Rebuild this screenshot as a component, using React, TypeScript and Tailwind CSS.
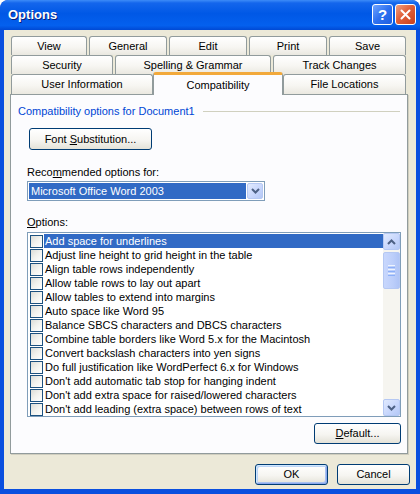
const font = "font-['Liberation_Sans',Arial,sans-serif]";

const rowOne = [
  { label: "View", w: "w-[76px]" },
  { label: "General", w: "w-[78px]" },
  { label: "Edit", w: "w-[78px]" },
  { label: "Print", w: "w-[78px]" },
  { label: "Save", w: "w-[77px]" },
];

const rowTwo = [
  { label: "Security", w: "w-[102px]" },
  { label: "Spelling & Grammar", w: "w-[156px]" },
  { label: "Track Changes", w: "w-[133px]" },
];

const options = [
  "Add space for underlines",
  "Adjust line height to grid height in the table",
  "Align table rows independently",
  "Allow table rows to lay out apart",
  "Allow tables to extend into margins",
  "Auto space like Word 95",
  "Balance SBCS characters and DBCS characters",
  "Combine table borders like Word 5.x for the Macintosh",
  "Convert backslash characters into yen signs",
  "Do full justification like WordPerfect 6.x for Windows",
  "Don't add automatic tab stop for hanging indent",
  "Don't add extra space for raised/lowered characters",
  "Don't add leading (extra space) between rows of text",
];

const tabBase =
  "flex items-center justify-center rounded-t-[3px] border border-b-0 border-[#919B9C] bg-[linear-gradient(180deg,#FFFFFF_0%,#F7F6F2_55%,#EAE8E0_100%)] text-[11px] text-black";

function Tab({ label, w }: { label: string; w: string }) {
  return <div className={`${tabBase} ${w} h-full`}>{label}</div>;
}

function XpButton({
  children,
  className,
  primary,
}: {
  children: React.ReactNode;
  className: string;
  primary?: boolean;
}) {
  return (
    <div
      className={`flex items-center justify-center rounded-[3px] border border-[#003C74] bg-[linear-gradient(180deg,#FFFFFF_0%,#F6F5F1_55%,#E4E2D8_100%)] text-[11px] text-black ${
        primary ? "shadow-[inset_1px_1px_0_#CEE7FF,inset_-1px_-1px_0_#8CA8EE,inset_2px_2px_0_#BCD4F6,inset_-2px_-2px_0_#A9C2F0]" : ""
      } ${className}`}
    >
      {children}
    </div>
  );
}

function Chevron({ up }: { up?: boolean }) {
  return (
    <svg width="9" height="6" viewBox="0 0 9 6">
      <polyline
        points={up ? "1,5 4.5,1.5 8,5" : "1,1 4.5,4.5 8,1"}
        fill="none"
        stroke="#4D6185"
        strokeWidth="2"
      />
    </svg>
  );
}

function ScrollButton({ up }: { up?: boolean }) {
  return (
    <div className="flex h-[17px] w-[17px] items-center justify-center rounded-[2px] border border-[#B5C8F3] bg-[linear-gradient(135deg,#E1EAFE_0%,#C6D5FC_60%,#B4C8F6_100%)]">
      <Chevron up={up} />
    </div>
  );
}

function Checkbox() {
  return (
    <div className="h-[13px] w-[13px] shrink-0 border border-[#1C5180] bg-[linear-gradient(135deg,#DCDCD7_0%,#F2F2EE_50%,#FFFFFF_100%)]" />
  );
}

export default function App() {
  return (
    <div className={`${font} flex h-[494px] w-[420px] flex-col overflow-hidden rounded-t-[8px] bg-[#0A4FDF]`}>
      {/* title bar */}
      <div className="flex h-[30px] shrink-0 items-center justify-between rounded-t-[8px] bg-[linear-gradient(180deg,#3D8CF8_0%,#1466EC_10%,#0058E6_45%,#0460EE_85%,#0049D4_100%)] pl-[8px] pr-[4px]">
        <span className="text-[13px] font-bold text-white [text-shadow:1px_1px_0_#0A1E78]">Options</span>
        <div className="flex gap-[2px] pb-[1px]">
          <div className="flex h-[21px] w-[21px] items-center justify-center rounded-[3px] border border-white bg-[linear-gradient(135deg,#6FA4FF_0%,#2E71F0_50%,#1F5EE0_100%)] text-[15px] font-bold leading-none text-white">
            ?
          </div>
          <div className="flex h-[21px] w-[21px] items-center justify-center rounded-[3px] border border-white bg-[linear-gradient(135deg,#F0A080_0%,#E0603A_45%,#C9401C_100%)]">
            <svg width="11" height="11" viewBox="0 0 11 11">
              <path d="M1.5 1.5 L9.5 9.5 M9.5 1.5 L1.5 9.5" stroke="white" strokeWidth="2" strokeLinecap="round" />
            </svg>
          </div>
        </div>
      </div>

      {/* body */}
      <div className="mx-[4px] mb-[5px] flex flex-1 flex-col bg-[#ECE9D8]">
        <div className="flex flex-col pl-[7px] pt-[6px]">
          <div className="flex h-[19px] gap-[2px]">
            {rowOne.map((t) => (
              <Tab key={t.label} label={t.label} w={t.w} />
            ))}
          </div>
          <div className="flex h-[19px] gap-[2px]">
            {rowTwo.map((t) => (
              <Tab key={t.label} label={t.label} w={t.w} />
            ))}
          </div>
          <div className="flex h-[20px] items-end">
            <div className={`${tabBase} h-full w-[142px]`}>User Information</div>
            <div className="relative z-10 -mb-px flex h-[23px] w-[130px] items-center justify-center rounded-t-[3px] border border-b-0 border-t-[3px] border-[#919B9C] border-t-[#F2A93B] bg-[#FCFCFE] text-[11px] text-black">
              Compatibility
            </div>
            <div className={`${tabBase} h-full w-[123px]`}>File Locations</div>
          </div>
        </div>

        {/* panel */}
        <div className="ml-[6px] flex h-[360px] w-[398px] flex-col border border-[#919B9C] bg-[#FCFCFE] shadow-[1px_1px_0_#D0CEBF]">
          <div className="mt-[10px] flex h-[13px] items-center pl-[7px] pr-[7px]">
            <span className="text-[11px] text-[#0046D5]">Compatibility options for Document1</span>
            <div className="ml-[8px] h-px flex-1 bg-[#D0D0BF]" />
          </div>

          <XpButton className="ml-[18px] mt-[10px] h-[22px] w-[123px]">
            <span>
              Font <span className="underline">S</span>ubstitution...
            </span>
          </XpButton>

          <div className="ml-[16px] mt-[16px] h-[13px] text-[11px] leading-[13px] text-black">
            Reco<span className="underline">m</span>mended options for:
          </div>
          <div className="ml-[16px] mt-[2px] flex h-[20px] w-[238px] items-center border border-[#7F9DB9] bg-white p-[1px]">
            <div className="flex h-full flex-1 items-center bg-[#316AC5] pl-[2px] text-[11px] text-white">
              Microsoft Office Word 2003
            </div>
            <div className="ml-[1px] flex h-full w-[16px] items-center justify-center rounded-[2px] border border-[#B5C8F3] bg-[linear-gradient(135deg,#E1EAFE_0%,#C6D5FC_60%,#B4C8F6_100%)]">
              <Chevron />
            </div>
          </div>

          <div className="ml-[16px] mt-[15px] h-[13px] text-[11px] leading-[13px] text-black">
            <span className="underline">O</span>ptions:
          </div>
          <div className="ml-[16px] mt-[3px] flex h-[185px] w-[374px] border border-[#7F9DB9] bg-white">
            <div className="flex flex-1 flex-col pt-[1px]">
              {options.map((o, i) => (
                <div key={o} className="flex h-[14px] items-center pl-[2px]">
                  <Checkbox />
                  <div
                    className={`ml-px flex h-full flex-1 items-center pl-px text-[11px] ${
                      i === 0 ? "bg-[#316AC5] text-white" : "text-black"
                    }`}
                  >
                    {o}
                  </div>
                </div>
              ))}
            </div>
            <div className="flex w-[17px] flex-col bg-[#F6F5F0]">
              <ScrollButton up />
              <div className="mt-[2px] flex h-[37px] flex-col items-center justify-center gap-[1px] rounded-[2px] border border-[#B5C8F3] bg-[linear-gradient(90deg,#C8D7FD_0%,#BCCEFA_60%,#AFC4F6_100%)]">
                <div className="h-px w-[7px] bg-[#EEF4FE]" />
                <div className="h-px w-[7px] bg-[#8CB0F8]" />
                <div className="h-px w-[7px] bg-[#EEF4FE]" />
                <div className="h-px w-[7px] bg-[#8CB0F8]" />
                <div className="h-px w-[7px] bg-[#EEF4FE]" />
                <div className="h-px w-[7px] bg-[#8CB0F8]" />
              </div>
              <div className="flex-1" />
              <ScrollButton />
            </div>
          </div>

          <div className="mr-[6px] mt-[6px] flex justify-end">
            <XpButton className="h-[21px] w-[87px]">
              <span>
                <span className="underline">D</span>efault...
              </span>
            </XpButton>
          </div>
        </div>

        <div className="mt-[10px] flex justify-end gap-[9px] pr-[6px]">
          <XpButton primary className="h-[21px] w-[73px]">
            OK
          </XpButton>
          <XpButton className="h-[21px] w-[73px]">Cancel</XpButton>
        </div>
      </div>
    </div>
  );
}
